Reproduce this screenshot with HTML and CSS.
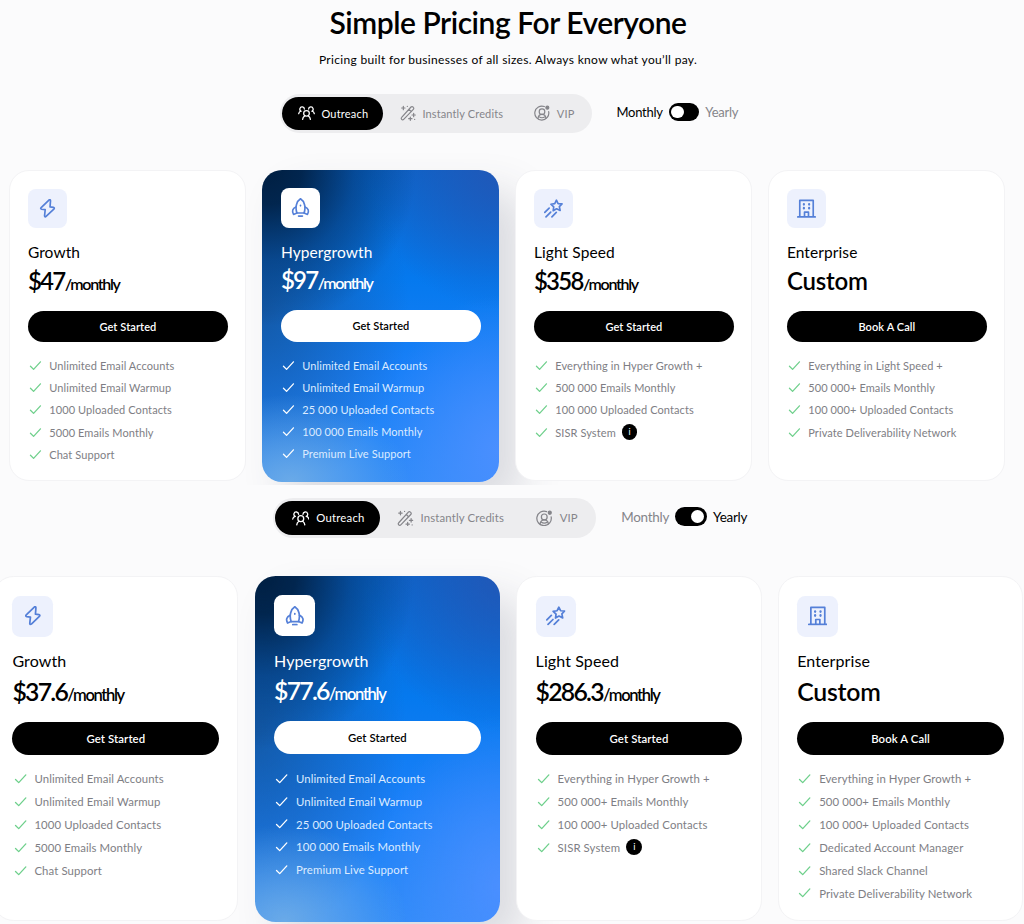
FILE: index.html
```html
<!DOCTYPE html>
<html lang="en">
<head>
    <meta charset="UTF-8">
    <meta name="viewport" content="width=device-width, initial-scale=1.0">
    <title>Pricing</title>
    <link rel="stylesheet" href="styles.css">
</head>
<body>
    <!-- Icons -->
    <svg class="sprite">
        <symbol id="i-check" viewBox="0 0 14 12"><path d="M1.5 6.8l3.4 3.4L12.4 2"/></symbol>
        <symbol id="i-team" viewBox="0 0 24 20">
            <circle cx="12" cy="10.5" r="4"/>
            <path d="M6.5 19c.2-2.500 1.300-4 3-5M17.500 19c-.2-2.500-1.300-4-3-5"/>
            <path d="M9 4.500A3.200 3.200 0 1 0 4.500 7.500C2.500 7.800 1.300 9 1 11M15 4.500A3.200 3.200 0 1 1 19.500 7.500c2 .3 3.200 1.500 3.500 3.500"/>
        </symbol>
        <symbol id="i-wand" viewBox="0 0 24 24">
            <path d="M2.500 18.500l14-15.500a2 2 0 0 1 3 0l.5.500a2 2 0 0 1 0 3L5.500 21.500a2 2 0 0 1-3 0 2 2 0 0 1 0-3zM13.500 6.500l3.500 3.500"/>
            <path d="M5 2v5M2.500 4.500h5M20.500 12.500v5M18 15h5M15.500 18v5M13 20.500h5M22 21.500v.1M11 2v.1"/>
        </symbol>
        <symbol id="i-vip" viewBox="0 0 24 24">
            <path d="M15.500 2.300A10.500 10.500 0 1 0 22 10"/>
            <circle cx="12" cy="10" r="4.200"/>
            <path d="M6 20c.5-3.500 2.700-5.800 6-5.800s5.500 2.300 6 5.800M8 17.800c2 1.800 6 1.800 8 0"/>
            <circle cx="20" cy="4" r="2.200" fill="currentColor"/>
        </symbol>
        <symbol id="i-bolt" viewBox="0 0 24 24">
            <path d="M13.800 1.300L4 10.800c-1 1-.6 1.900.5 2.100l4.600.6L8.300 21c-.1 1.500.9 2 1.900 1L20 12.700c1-1 .6-1.900-.5-2.100l-4.300-.6.6-7.700c.1-1.500-1-2-2-1z"/>
        </symbol>
        <symbol id="i-rocket" viewBox="0 0 24 24">
            <path d="M7.500 19C4.800 11 7.300 4 12 1c4.700 3 7.200 10 4.500 18z"/>
            <path d="M6.200 11.500C2 13.200.8 16.500 3.200 20.800l4.300-1.800M17.800 11.500C22 13.200 23.200 16.500 20.800 20.800L16.500 19M9.500 22.800h5M12 9.300v.6"/>
        </symbol>
        <symbol id="i-star" viewBox="0 0 24 24">
            <path d="M15.700 1.500l2.100 4.300 5 .3-3.400 3.500 1 4.900-4.500-2.200-4.300 2.500.7-4.900-3.600-3.300 4.900-.8z"/>
            <path d="M6.500 11.500L1 17M8.500 16.500L2.500 22.500M15.500 17l-5.500 5.500"/>
        </symbol>
        <symbol id="i-building" viewBox="0 0 24 24">
            <path d="M1 22.500h22M3.500 22.500V1.800h17v20.700M9.500 22.500v-6h5v6"/>
            <path d="M8.700 6.500v.6M15.300 6.500v.6M8.700 11.300v.6M15.300 11.300v.6" stroke-width="2.800"/>
        </symbol>
    </svg>

    <header class="intro">
        <h1>Simple Pricing For Everyone</h1>
        <p>Pricing built for businesses of all sizes. Always know what you’ll pay.</p>
    </header>

    <section class="pricing monthly">
        <div class="controls">
            <div class="tabs">
                <button class="tab active"><svg><use href="#i-team"/></svg>Outreach</button>
                <button class="tab"><svg><use href="#i-wand"/></svg>Instantly Credits</button>
                <button class="tab tab-vip"><svg><use href="#i-vip"/></svg>VIP</button>
            </div>
            <div class="billing">
                <span class="on">Monthly</span>
                <span class="switch"><span class="knob"></span></span>
                <span>Yearly</span>
            </div>
        </div>
        <div class="cards">
            <div class="card">
                <div class="icon"><svg><use href="#i-bolt"/></svg></div>
                <h2>Growth</h2>
                <div class="price">$47<small>/monthly</small></div>
                <button class="btn">Get Started</button>
                <ul>
                    <li><svg><use href="#i-check"/></svg>Unlimited Email Accounts</li>
                    <li><svg><use href="#i-check"/></svg>Unlimited Email Warmup</li>
                    <li><svg><use href="#i-check"/></svg>1000 Uploaded Contacts</li>
                    <li><svg><use href="#i-check"/></svg>5000 Emails Monthly</li>
                    <li><svg><use href="#i-check"/></svg>Chat Support</li>
                </ul>
            </div>
            <div class="card featured">
                <div class="icon"><svg><use href="#i-rocket"/></svg></div>
                <h2>Hypergrowth</h2>
                <div class="price">$97<small>/monthly</small></div>
                <button class="btn">Get Started</button>
                <ul>
                    <li><svg><use href="#i-check"/></svg>Unlimited Email Accounts</li>
                    <li><svg><use href="#i-check"/></svg>Unlimited Email Warmup</li>
                    <li><svg><use href="#i-check"/></svg>25 000 Uploaded Contacts</li>
                    <li><svg><use href="#i-check"/></svg>100 000 Emails Monthly</li>
                    <li><svg><use href="#i-check"/></svg>Premium Live Support</li>
                </ul>
            </div>
            <div class="card">
                <div class="icon"><svg><use href="#i-star"/></svg></div>
                <h2>Light Speed</h2>
                <div class="price">$358<small>/monthly</small></div>
                <button class="btn">Get Started</button>
                <ul>
                    <li><svg><use href="#i-check"/></svg>Everything in Hyper Growth +</li>
                    <li><svg><use href="#i-check"/></svg>500 000 Emails Monthly</li>
                    <li><svg><use href="#i-check"/></svg>100 000 Uploaded Contacts</li>
                    <li><svg><use href="#i-check"/></svg>SISR System<span class="info">i</span></li>
                </ul>
            </div>
            <div class="card">
                <div class="icon"><svg><use href="#i-building"/></svg></div>
                <h2>Enterprise</h2>
                <div class="price custom">Custom</div>
                <button class="btn">Book A Call</button>
                <ul>
                    <li><svg><use href="#i-check"/></svg>Everything in Light Speed +</li>
                    <li><svg><use href="#i-check"/></svg>500 000+ Emails Monthly</li>
                    <li><svg><use href="#i-check"/></svg>100 000+ Uploaded Contacts</li>
                    <li><svg><use href="#i-check"/></svg>Private Deliverability Network</li>
                </ul>
            </div>
        </div>
    </section>

    <section class="pricing yearly">
        <div class="controls">
            <div class="tabs">
                <button class="tab active"><svg><use href="#i-team"/></svg>Outreach</button>
                <button class="tab"><svg><use href="#i-wand"/></svg>Instantly Credits</button>
                <button class="tab tab-vip"><svg><use href="#i-vip"/></svg>VIP</button>
            </div>
            <div class="billing">
                <span>Monthly</span>
                <span class="switch"><span class="knob"></span></span>
                <span class="on">Yearly</span>
            </div>
        </div>
        <div class="cards">
            <div class="card">
                <div class="icon"><svg><use href="#i-bolt"/></svg></div>
                <h2>Growth</h2>
                <div class="price">$37.6<small>/monthly</small></div>
                <button class="btn">Get Started</button>
                <ul>
                    <li><svg><use href="#i-check"/></svg>Unlimited Email Accounts</li>
                    <li><svg><use href="#i-check"/></svg>Unlimited Email Warmup</li>
                    <li><svg><use href="#i-check"/></svg>1000 Uploaded Contacts</li>
                    <li><svg><use href="#i-check"/></svg>5000 Emails Monthly</li>
                    <li><svg><use href="#i-check"/></svg>Chat Support</li>
                </ul>
            </div>
            <div class="card featured">
                <div class="icon"><svg><use href="#i-rocket"/></svg></div>
                <h2>Hypergrowth</h2>
                <div class="price">$77.6<small>/monthly</small></div>
                <button class="btn">Get Started</button>
                <ul>
                    <li><svg><use href="#i-check"/></svg>Unlimited Email Accounts</li>
                    <li><svg><use href="#i-check"/></svg>Unlimited Email Warmup</li>
                    <li><svg><use href="#i-check"/></svg>25 000 Uploaded Contacts</li>
                    <li><svg><use href="#i-check"/></svg>100 000 Emails Monthly</li>
                    <li><svg><use href="#i-check"/></svg>Premium Live Support</li>
                </ul>
            </div>
            <div class="card">
                <div class="icon"><svg><use href="#i-star"/></svg></div>
                <h2>Light Speed</h2>
                <div class="price">$286.3<small>/monthly</small></div>
                <button class="btn">Get Started</button>
                <ul>
                    <li><svg><use href="#i-check"/></svg>Everything in Hyper Growth +</li>
                    <li><svg><use href="#i-check"/></svg>500 000+ Emails Monthly</li>
                    <li><svg><use href="#i-check"/></svg>100 000+ Uploaded Contacts</li>
                    <li><svg><use href="#i-check"/></svg>SISR System<span class="info">i</span></li>
                </ul>
            </div>
            <div class="card">
                <div class="icon"><svg><use href="#i-building"/></svg></div>
                <h2>Enterprise</h2>
                <div class="price custom">Custom</div>
                <button class="btn">Book A Call</button>
                <ul>
                    <li><svg><use href="#i-check"/></svg>Everything in Hyper Growth +</li>
                    <li><svg><use href="#i-check"/></svg>500 000+ Emails Monthly</li>
                    <li><svg><use href="#i-check"/></svg>100 000+ Uploaded Contacts</li>
                    <li><svg><use href="#i-check"/></svg>Dedicated Account Manager</li>
                    <li><svg><use href="#i-check"/></svg>Shared Slack Channel</li>
                    <li><svg><use href="#i-check"/></svg>Private Deliverability Network</li>
                </ul>
            </div>
        </div>
    </section>
</body>
</html>
```
FILE: styles.css
```css
* {
    box-sizing: border-box;
}
body {
    margin: 0;
    height: 924px;
    overflow: hidden;
    background: #fbfbfc;
    color: #000;
    font-family: Lato, "Liberation Sans", sans-serif;
}
h1, h2, p, ul {
    margin: 0;
    padding: 0;
}
button {
    border: none;
    padding: 0;
    font-family: inherit;
    cursor: pointer;
}
svg {
    display: block;
    flex: none;
    fill: none;
    stroke: currentColor;
    stroke-width: 1.8;
    stroke-linecap: round;
    stroke-linejoin: round;
}
.sprite {
    display: none;
}
.intro {
    height: 94px;
    padding: 2px 8px 0 0;
    text-align: center;
}
.intro h1 {
    font-size: 30px;
    line-height: 40px;
    font-weight: 600;
    letter-spacing: -0.45px;
}
.intro p {
    margin-top: 9px;
    font-size: 12px;
    line-height: 18px;
    letter-spacing: 0.33px;
}

.pricing {
    overflow: hidden;
}
.monthly {
    --u: 1px;
    height: 391px;
    padding-left: 9.4px;
}
.yearly {
    --u: 1.034px;
    height: 439px;
    margin-left: -6.7px;
    padding-top: 13px;
}

/* tabs and billing switch */
.controls {
    display: flex;
    gap: calc(var(--u) * 24.5);
    width: max-content;
}
.monthly .controls {
    margin-left: 270.5px;
}
.yearly .controls {
    margin-left: 280px;
}
.tabs {
    display: flex;
    width: calc(var(--u) * 312);
    height: calc(var(--u) * 39);
    padding: calc(var(--u) * 2.5) calc(var(--u) * 2);
    background: #ededef;
    border-radius: calc(var(--u) * 20);
}
.tab {
    display: flex;
    align-items: center;
    gap: calc(var(--u) * 6.5);
    height: calc(var(--u) * 33.5);
    padding-left: calc(var(--u) * 16.5);
    background: none;
    color: #85858a;
    font-size: calc(var(--u) * 11);
    letter-spacing: calc(var(--u) * 0.13);
}
.tab svg {
    width: calc(var(--u) * 16);
    height: calc(var(--u) * 16);
}
.tab.active {
    width: calc(var(--u) * 101.5);
    padding-left: calc(var(--u) * 16);
    background: #000;
    color: #fff;
    border-radius: calc(var(--u) * 17);
    letter-spacing: calc(var(--u) * 0.2);
}
.tab.active svg {
    width: calc(var(--u) * 17);
}
.tab-vip {
    margin-left: auto;
    margin-right: calc(var(--u) * 15.5);
}
.billing {
    display: flex;
    align-items: center;
    gap: calc(var(--u) * 6);
    height: calc(var(--u) * 36);
    color: #85858a;
    font-size: calc(var(--u) * 13);
    letter-spacing: calc(var(--u) * -0.25);
}
.billing .on {
    color: #000;
}
.switch {
    display: flex;
    align-items: center;
    width: calc(var(--u) * 30.5);
    height: calc(var(--u) * 18.5);
    padding: 0 calc(var(--u) * 2.5);
    background: #000;
    border-radius: calc(var(--u) * 9.5);
}
.yearly .switch {
    justify-content: flex-end;
}
.knob {
    width: calc(var(--u) * 12.5);
    height: calc(var(--u) * 12.5);
    background: #fff;
    border-radius: 50%;
}

/* cards */
.cards {
    display: flex;
    gap: calc(var(--u) * 16);
    margin-top: calc(var(--u) * 36.7);
}
.card {
    position: relative;
    flex: none;
    width: calc(var(--u) * 237);
    padding: calc(var(--u) * 18) calc(var(--u) * 17.5) calc(var(--u) * 15);
    background: #fff;
    border: 1px solid #f3f3f5;
    border-radius: calc(var(--u) * 20);
}
.icon {
    display: flex;
    align-items: center;
    justify-content: center;
    width: calc(var(--u) * 39.5);
    height: calc(var(--u) * 39.5);
    background: #edf1fd;
    border-radius: calc(var(--u) * 8);
    color: #5580d8;
}
.icon svg {
    width: calc(var(--u) * 19);
    height: calc(var(--u) * 19);
    stroke-width: 2.1;
}
.card h2 {
    margin-top: calc(var(--u) * 13);
    font-size: calc(var(--u) * 15.5);
    line-height: calc(var(--u) * 22);
    font-weight: 400;
    letter-spacing: calc(var(--u) * 0.1);
}
.price {
    height: calc(var(--u) * 32);
    margin-top: calc(var(--u) * 1.8);
    font-size: calc(var(--u) * 24);
    line-height: calc(var(--u) * 32);
    font-weight: 600;
    letter-spacing: calc(var(--u) * -1.7);
}
.price small {
    margin-left: calc(var(--u) * 0.2);
    font-size: calc(var(--u) * 16);
    letter-spacing: calc(var(--u) * -1.3);
}
.price.custom {
    letter-spacing: calc(var(--u) * -0.2);
}
.btn {
    display: block;
    width: 100%;
    height: calc(var(--u) * 31.5);
    margin-top: calc(var(--u) * 13.7);
    background: #000;
    color: #fff;
    border-radius: calc(var(--u) * 16);
    font-size: calc(var(--u) * 11);
    font-weight: 600;
    letter-spacing: calc(var(--u) * 0.1);
}
.card ul {
    margin-top: calc(var(--u) * 12.5);
    list-style: none;
}
.card li {
    display: flex;
    align-items: center;
    height: calc(var(--u) * 22.1);
    color: #7e7e84;
    font-size: calc(var(--u) * 11);
    letter-spacing: calc(var(--u) * 0.1);
}
.card li svg {
    width: calc(var(--u) * 13);
    height: calc(var(--u) * 11);
    margin: 0 calc(var(--u) * 7) 0 calc(var(--u) * 1.3);
    color: #6fd08c;
    stroke-width: 1.4;
}
.info {
    width: calc(var(--u) * 15.5);
    height: calc(var(--u) * 15.5);
    margin-left: calc(var(--u) * 6);
    background: #000;
    color: #fff;
    border-radius: 50%;
    font-size: calc(var(--u) * 9);
    line-height: calc(var(--u) * 15.5);
    text-align: center;
    letter-spacing: 0;
}
.featured {
    margin-bottom: -0.5px;
    border: none;
    padding: calc(var(--u) * 18.5) calc(var(--u) * 18.5) calc(var(--u) * 15);
    color: #fff;
    background:
        radial-gradient(ellipse 62% 50% at 3% 0%, #001f42 0%, rgba(0, 31, 66, 0.9) 22%, rgba(0, 40, 88, 0.45) 58%, rgba(0, 60, 130, 0) 100%),
        radial-gradient(ellipse 55% 45% at 100% 0%, #2058b8 0%, rgba(32, 88, 184, 0) 100%),
        radial-gradient(ellipse 50% 28% at 12% 100%, #6aaae8 0%, rgba(90, 160, 230, 0) 100%),
        radial-gradient(ellipse 62% 60% at 0% 45%, rgba(20, 88, 165, 0.95) 0%, rgba(16, 88, 170, 0) 100%),
        radial-gradient(ellipse 50% 50% at 100% 90%, #4a8fff 0%, rgba(74, 143, 255, 0) 100%),
        linear-gradient(#0a66cc 0%, #0579ee 35%, #1a80f8 65%, #2f8bf8 100%);
    box-shadow: 22px 22px 40px rgba(60, 66, 90, 0.17);
}
.featured .icon {
    background: #fff;
}
.featured li {
    color: #dcebff;
}
.featured li svg {
    color: #fff;
}
.featured .btn {
    background: #fff;
    color: #000;
}
```
